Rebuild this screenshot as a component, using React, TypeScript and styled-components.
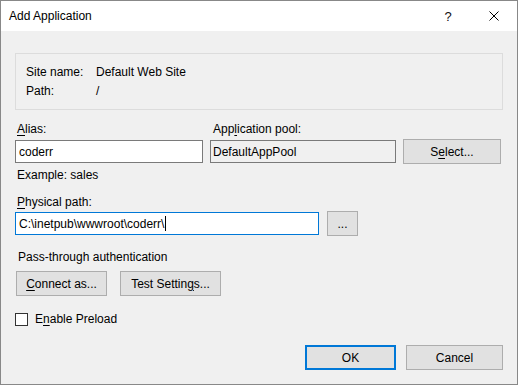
import React from 'react';
import styled, { createGlobalStyle } from 'styled-components';

const GlobalStyle = createGlobalStyle`
  html, body {
    margin: 0;
    padding: 0;
    background: #f0f0f0;
  }
  body {
    font-family: 'Liberation Sans', Arial, sans-serif;
    font-size: 12px;
    color: #000;
  }
`;

const Window = styled.div`
  box-sizing: border-box;
  width: 518px;
  height: 385px;
  border: 1px solid #888;
  display: flex;
  flex-direction: column;
  background: #f0f0f0;
`;

const TitleBar = styled.div`
  height: 30px;
  background: #fff;
  display: flex;
  align-items: center;
  padding-left: 8px;
  flex-shrink: 0;
`;

const Title = styled.div`
  flex: 1;
  font-size: 12px;
  line-height: 16px;
`;

const TitleButton = styled.div<{ $width: number }>`
  width: ${(p) => p.$width}px;
  height: 30px;
  display: flex;
  align-items: center;
  justify-content: center;
  font-size: 13px;
  color: #111;
`;

const Body = styled.div`
  flex: 1;
  display: flex;
  flex-direction: column;
  padding: 22px 14px 0 14px;
`;

const GroupBox = styled.div`
  box-sizing: border-box;
  height: 57px;
  border: 1px solid #dcdcdc;
  padding: 10px 10px 0 10px;
  display: grid;
  grid-template-columns: 70px auto;
  align-content: start;
  row-gap: 3px;
  line-height: 16px;
`;

const Text = styled.div<{ $top?: number; $left?: number }>`
  line-height: 16px;
  margin-top: ${(p) => p.$top ?? 0}px;
  margin-left: ${(p) => p.$left ?? 0}px;
  white-space: nowrap;
`;

const Key = styled.span`
  text-decoration: underline;
  text-underline-offset: 2px;
`;

const FieldGrid = styled.div`
  display: grid;
  grid-template-columns: 188px 186px 98px;
  column-gap: 7px;
  row-gap: 2px;
  align-items: center;
  margin-top: 11px;
`;

const Row = styled.div<{ $gap: number; $top: number; $left?: number }>`
  display: flex;
  align-items: center;
  gap: ${(p) => p.$gap}px;
  margin-top: ${(p) => p.$top}px;
  margin-left: ${(p) => p.$left ?? 0}px;
`;

const Input = styled.div<{ $width?: number; $focused?: boolean; $readOnly?: boolean }>`
  box-sizing: border-box;
  height: 23px;
  width: ${(p) => (p.$width ? `${p.$width}px` : 'auto')};
  border: 1px solid ${(p) => (p.$focused ? '#0078d7' : '#7a7a7a')};
  background: ${(p) => (p.$readOnly ? '#f0f0f0' : '#fff')};
  padding-left: ${(p) => (p.$readOnly ? 2 : 3)}px;
  display: flex;
  align-items: center;
  line-height: 16px;
  white-space: nowrap;
`;

const Caret = styled.span`
  display: inline-block;
  width: 1px;
  height: 15px;
  background: #000;
  margin-left: 1px;
`;

const Button = styled.div<{ $width?: number; $default?: boolean }>`
  box-sizing: border-box;
  height: 25px;
  width: ${(p) => (p.$width ? `${p.$width}px` : 'auto')};
  background: #e1e1e1;
  border: ${(p) => (p.$default ? '2px solid #0078d7' : '1px solid #adadad')};
  display: flex;
  align-items: center;
  justify-content: center;
  line-height: 16px;
  white-space: nowrap;
`;

const CheckBox = styled.div`
  box-sizing: border-box;
  width: 13px;
  height: 13px;
  border: 1px solid #333;
  background: #fff;
`;

const Footer = styled.div`
  display: flex;
  justify-content: flex-end;
  gap: 10px;
  margin-top: 18px;
`;

export default function App() {
  return (
    <>
      <GlobalStyle />
      <Window>
        <TitleBar>
          <Title>Add Application</Title>
          <TitleButton $width={46}>?</TitleButton>
          <TitleButton $width={46}>
            <svg width="10" height="10" viewBox="0 0 10 10">
              <path d="M0.5 0.5 L9.5 9.5 M9.5 0.5 L0.5 9.5" stroke="#000" strokeWidth="1" />
            </svg>
          </TitleButton>
        </TitleBar>
        <Body>
          <GroupBox>
            <Text>Site name:</Text>
            <Text>Default Web Site</Text>
            <Text>Path:</Text>
            <Text>/</Text>
          </GroupBox>

          <FieldGrid>
            <Text $left={2}>
              <Key>A</Key>lias:
            </Text>
            <Text $left={3}>
              App<Key>l</Key>ication pool:
            </Text>
            <div />
            <Input>coderr</Input>
            <Input $readOnly>DefaultAppPool</Input>
            <Button>
              S<Key>e</Key>lect...
            </Button>
          </FieldGrid>

          <Text $top={3} $left={2}>Example: sales</Text>

          <Text $top={11} $left={2}>
            <Key>P</Key>hysical path:
          </Text>
          <Row $gap={8} $top={1}>
            <Input $width={304} $focused>
              C:\inetpub\wwwroot\coderr\<Caret />
            </Input>
            <Button $width={31}>...</Button>
          </Row>

          <Text $top={13} $left={3}>Pass-through authentication</Text>
          <Row $gap={13} $top={6} $left={1}>
            <Button $width={91}>
              <Key>C</Key>onnect as...
            </Button>
            <Button $width={101}>
              Test Settin<Key>g</Key>s...
            </Button>
          </Row>

          <Row $gap={7} $top={15}>
            <CheckBox />
            <Text>
              E<Key>n</Key>able Preload
            </Text>
          </Row>

          <Footer>
            <Button $width={91} $default>OK</Button>
            <Button $width={97}>Cancel</Button>
          </Footer>
        </Body>
      </Window>
    </>
  );
}
